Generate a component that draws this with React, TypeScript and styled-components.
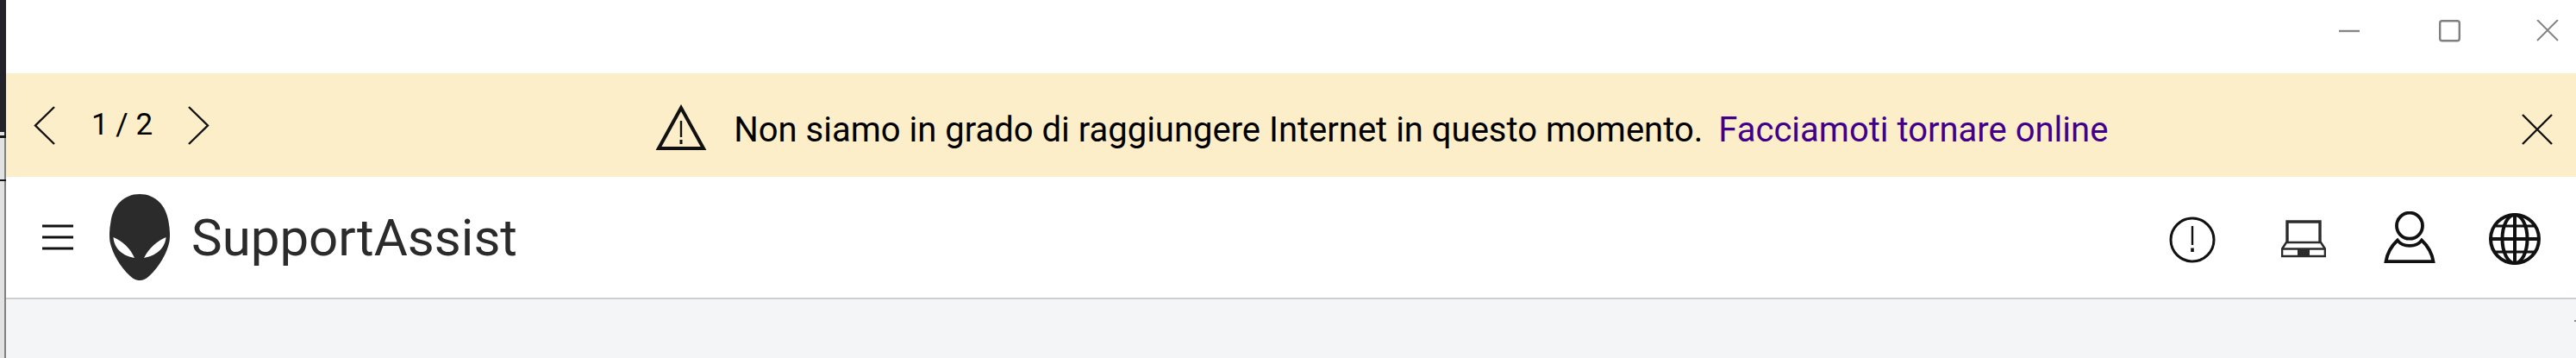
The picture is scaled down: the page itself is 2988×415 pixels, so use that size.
import styled, {createGlobalStyle} from 'styled-components';

const GlobalStyle = createGlobalStyle`
    html, body {
        margin: 0;
        padding: 0;
        height: 415px;
        overflow: hidden;
        background: #fff;
        font-family: Roboto, "Liberation Sans", sans-serif;
    }
`;

const App = () => {
    return <Root>
        <GlobalStyle/>
        <DesktopEdge>
            <EdgeDark/>
            <EdgeTick/>
            <EdgeBlack $h={3}/>
            <EdgeGray $h={48}/>
            <EdgeBlack $h={2}/>
            <EdgeGray $h={205}/>
        </DesktopEdge>

        <Window>
            <TitleBar>
                <WindowButton aria-label="Minimize">
                    <svg width="26" height="26" viewBox="0 0 26 26" fill="none" stroke="#858585" strokeWidth="2.4">
                        <path d="M1 13h24"/>
                    </svg>
                </WindowButton>
                <WindowButton aria-label="Maximize">
                    <svg width="26" height="26" viewBox="0 0 26 26" fill="none" stroke="#808080" strokeWidth="2.4">
                        <rect x="1.200" y="1.200" width="22.600" height="23" rx="2.500"/>
                    </svg>
                </WindowButton>
                <WindowButton aria-label="Close">
                    <svg width="26" height="26" viewBox="0 0 26 26" fill="none" stroke="#858585" strokeWidth="2">
                        <path d="M1 0l24 24M25 0L1 24"/>
                    </svg>
                </WindowButton>
            </TitleBar>

            <Banner>
                <Pager>
                    <ArrowButton aria-label="Previous">
                        <svg width="25" height="45" viewBox="0 0 25 45" fill="none" stroke="#111" strokeWidth="2.4">
                            <path d="M24 1L2 22.500 24 44"/>
                        </svg>
                    </ArrowButton>
                    <PagerText>1 / 2</PagerText>
                    <ArrowButton aria-label="Next">
                        <svg width="25" height="45" viewBox="0 0 25 45" fill="none" stroke="#111" strokeWidth="2.4">
                            <path d="M1 1l22 21.500L1 44"/>
                        </svg>
                    </ArrowButton>
                </Pager>

                <Message>
                    <WarningIcon width="60" height="54" viewBox="0 0 60 54" fill="none" stroke="#111">
                        <path d="M30 4L4 51h52z" strokeWidth="4"/>
                        <path d="M30 19v19" strokeWidth="2.400"/>
                        <path d="M30 41v5" strokeWidth="3"/>
                    </WarningIcon>
                    <MessageText>Non siamo in grado di raggiungere Internet in questo momento.</MessageText>
                    <MessageLink href="#">Facciamoti tornare online</MessageLink>
                </Message>

                <DismissButton aria-label="Dismiss">
                    <svg width="36" height="36" viewBox="0 0 36 36" fill="none" stroke="#111" strokeWidth="2.400">
                        <path d="M1 1l34 34M35 1L1 35"/>
                    </svg>
                </DismissButton>
            </Banner>

            <Header>
                <Brand>
                    <MenuButton aria-label="Menu">
                        <svg width="36" height="32" viewBox="0 0 36 32" fill="none" stroke="#111" strokeWidth="3">
                            <path d="M0 3h36M0 16h36M0 29h36"/>
                        </svg>
                    </MenuButton>
                    <svg width="70" height="100" viewBox="0 0 70 100">
                        <path
                            fill="#2b2b2b"
                            fillRule="evenodd"
                            d="M35 0C54 0 66 14 68.500 32C70 40 70.500 48 69.500 55C67 68 58 84 46 95C42 99 38 100 35 100C32 100 28 99 24 95C12 84 3 68 .5 55C-.5 48 0 40 1.500 32C4 14 16 0 35 0Z
                               M4.500 50C14 54 24 62 29 74C12 71 5 60 4.500 50Z
                               M65.500 50C56 54 46 62 40 74C57 71 65 60 65.500 50Z"
                        />
                    </svg>
                    <BrandName>SupportAssist</BrandName>
                </Brand>

                <HeaderIcons>
                    <IconButton aria-label="Alerts" $left={0} $top={6}>
                        <svg width="54" height="54" viewBox="0 0 54 54" fill="none" stroke="#111">
                            <circle cx="27" cy="27" r="25" strokeWidth="3"/>
                            <path d="M27 11v22" strokeWidth="2.400"/>
                            <path d="M27 36.500v4.500" strokeWidth="3.600"/>
                        </svg>
                    </IconButton>
                    <IconButton aria-label="Device" $left={76} $top={3}>
                        <svg width="52" height="44" viewBox="0 0 52 44" fill="none" stroke="#2b2b2b">
                            <path d="M7 27V2h38v25" strokeWidth="3.400"/>
                            <path d="M6 26h40l5 7.500V42H1v-8.500z" strokeWidth="2.600"/>
                            <path d="M1 33.500h50" strokeWidth="2.600"/>
                            <path d="M19 38h14" strokeWidth="8"/>
                        </svg>
                    </IconButton>
                    <IconButton aria-label="Account" $left={67} $top={0}>
                        <svg width="60" height="60" viewBox="0 0 60 60" fill="none" stroke="#111" strokeWidth="3.800">
                            <circle cx="30" cy="16.700" r="15"/>
                            <path d="M16 33.500C22 42 38 42 44 33.500C51 40 56 49 57.500 58.200H2.500C4 49 9 40 16 33.500Z"/>
                        </svg>
                    </IconButton>
                    <IconButton aria-label="Language" $left={62} $top={4}>
                        <svg width="60" height="60" viewBox="0 0 60 60" fill="none" stroke="#111" strokeWidth="4">
                            <circle cx="30" cy="30" r="28"/>
                            <ellipse cx="30" cy="30" rx="14.500" ry="28"/>
                            <path d="M30 2v56M2 30h56"/>
                            <path d="M6.500 15h47M6.500 45h47" strokeWidth="3.200"/>
                        </svg>
                    </IconButton>
                </HeaderIcons>
            </Header>

            <Content/>
        </Window>
    </Root>;
};

export default App;


const Root = styled.div`
    display: flex;
    width: 2988px;
    height: 415px;
    overflow: hidden;
`;

const DesktopEdge = styled.div`
    display: flex;
    flex-direction: column;
    flex: 0 0 7px;
`;

const EdgeDark = styled.div`
    flex: 0 0 153px;
    background: #24232b;
`;

const EdgeTick = styled.div`
    flex: 0 0 4px;
    background: linear-gradient(90deg, #e8e4dc 0, #e8e4dc 5px, #24232b 5px);
`;

const EdgeBlack = styled.div<{$h: number}>`
    flex: 0 0 ${props => props.$h}px;
    background: #14141a;
`;

const EdgeGray = styled.div<{$h: number}>`
    flex: 0 0 ${props => props.$h}px;
    background: linear-gradient(90deg, #e2e2e2 0, #e2e2e2 5px, #808080 5px, #808080 7px);
`;

const Window = styled.div`
    display: flex;
    flex-direction: column;
    flex: 1;
    min-width: 0;
    background: #fff;
`;

const TitleBar = styled.div`
    display: flex;
    justify-content: flex-end;
    align-items: flex-start;
    gap: 87px;
    flex: 0 0 85px;
    padding: 23px 20px 0 0;
    box-sizing: border-box;
`;

const WindowButton = styled.button`
    display: flex;
    width: 26px;
    height: 26px;
    padding: 0;
    border: 0;
    background: none;

    &:first-child {
        margin-right: 4px;
    }
`;

const Banner = styled.div`
    display: flex;
    align-items: center;
    flex: 0 0 120px;
    background: #fdeeca;
    color: #000;
`;

const Pager = styled.div`
    display: flex;
    align-items: center;
    flex: 0 0 auto;
    padding-left: 32px;
`;

const ArrowButton = styled.button`
    display: flex;
    padding: 0;
    border: 0;
    background: none;
`;

const PagerText = styled.span`
    margin: 0 41px 0 42px;
    font-size: 35px;
    font-weight: 400;
    line-height: 44px;
`;

const Message = styled.div`
    display: flex;
    align-items: center;
    flex: 0 0 auto;
    margin-left: 517px;
    font-size: 40px;
`;

const WarningIcon = styled.svg`
    margin: 5px 31px 0 0;
`;

const MessageText = styled.span`
    margin-top: 10px;
    color: #000;
`;

const MessageLink = styled.a`
    margin: 10px 0 0 18px;
    color: #42008a;
    text-decoration: none;
`;

const DismissButton = styled.button`
    display: flex;
    padding: 0;
    margin: 10px 27px 0 auto;
    border: 0;
    background: none;
`;

const Header = styled.div`
    display: flex;
    align-items: center;
    justify-content: space-between;
    flex: 0 0 142px;
    box-sizing: border-box;
    border-bottom: 2px solid #d0d0d2;
`;

const Brand = styled.div`
    display: flex;
    align-items: center;
`;

const MenuButton = styled.button`
    display: flex;
    padding: 0;
    margin: 0 42px;
    border: 0;
    background: none;
`;

const BrandName = styled.span`
    margin-left: 25px;
    font-size: 60px;
    font-weight: 400;
    color: #2b2b2b;
`;

const HeaderIcons = styled.div`
    display: flex;
    align-items: center;
    padding-right: 41px;
`;

const IconButton = styled.button<{$left: number; $top: number}>`
    display: flex;
    padding: 0;
    margin-left: ${props => props.$left}px;
    margin-top: ${props => props.$top}px;
    border: 0;
    background: none;
`;

const Content = styled.div`
    position: relative;
    flex: 1;
    background: #f4f5f7;

    &::after {
        content: "";
        position: absolute;
        top: 24px;
        right: 0;
        width: 2px;
        height: 2px;
        background: #8a8a8a;
    }
`;
